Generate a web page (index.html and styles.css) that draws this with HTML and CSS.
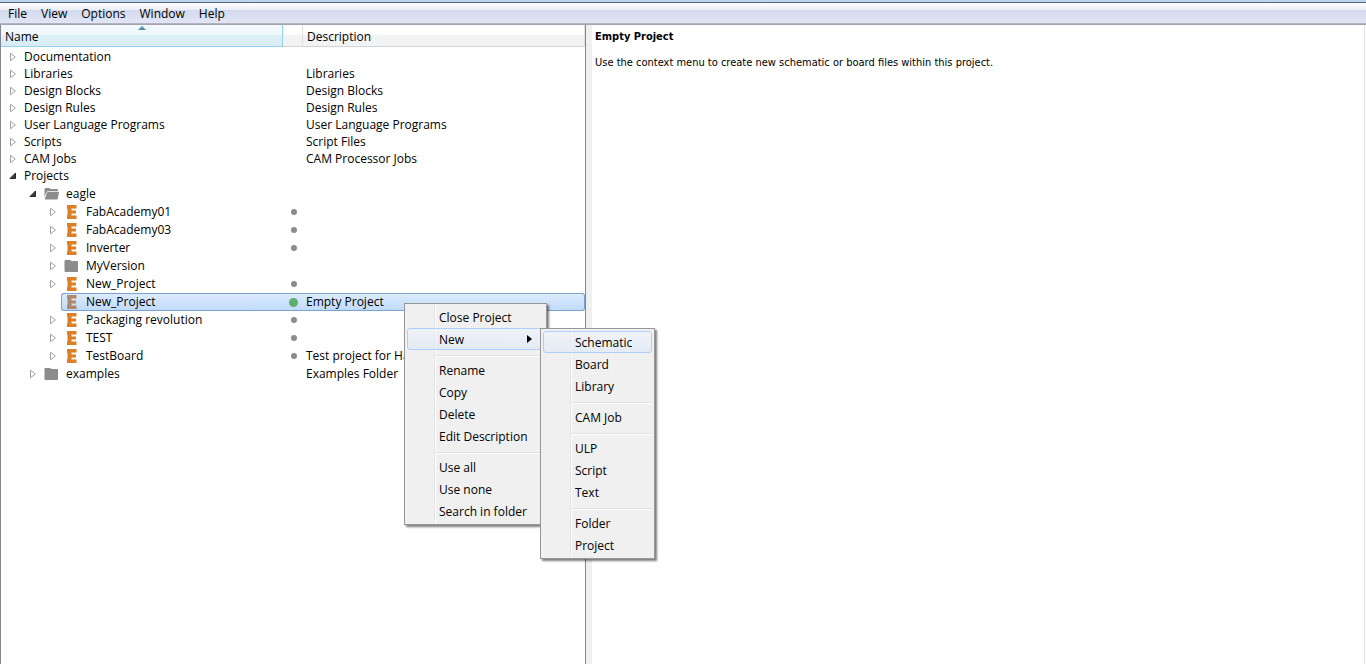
FILE: index.html
```
<!DOCTYPE html>
<html lang="en">

<head>
    <meta charset="utf-8">
    <title>Control Panel</title>
    <link rel="stylesheet" href="styles.css">
</head>

<body>
    <!-- Shared icons -->
    <svg class="symbols" aria-hidden="true">
        <symbol id="closed" viewBox="0 0 8 10">
            <path d="M1.5 1.2 L6.3 5 L1.5 8.8 Z" fill="#fff" stroke="#a0a0a0"/>
        </symbol>
        <symbol id="opened" viewBox="0 0 8 10">
            <path d="M6.5 2 V7.5 H1 Z" fill="#404040" stroke="#262626"/>
        </symbol>
        <symbol id="folder" viewBox="0 0 16 16">
            <path d="M0.5 3 Q0.5 2 1.5 2 H6 L7.5 3 H13 Q14 3 14 4 V13 Q14 14 13 14 H1.5 Q0.5 14 0.5 13 Z" fill="#8c8c8c"/>
        </symbol>
        <symbol id="folder-open" viewBox="0 0 16 16">
            <path d="M0.5 3 Q0.5 2 1.5 2 H5.5 L6.5 3 H13 Q14 3 14 4 V5.2 H4 Q3 5.2 2.700 6 L0.5 10.5 Z" fill="#8c8c8c"/>
            <path d="M4 6 H15 L13.800 12.600 Q13.600 13.600 12.600 13.600 H1.5 Q0.700 13.600 1 12.600 L2.800 7 Q3.200 6 4 6 Z" fill="#8c8c8c"/>
        </symbol>
        <symbol id="project" viewBox="0 0 16 16">
            <path d="M3 1 H12.5 V4.500 H7.500 V6.500 H12 V9.500 H7.500 V11.500 H12.5 V15 H3 V11.500 L3.500 11 V5 L3 4.500 Z" fill="currentColor"/>
        </symbol>
    </svg>

    <nav class="menubar">
        <button>File</button>
        <button>View</button>
        <button>Options</button>
        <button>Window</button>
        <button>Help</button>
    </nav>

    <main class="panes">
        <section class="tree-pane">
            <table class="tree">
                <colgroup>
                    <col class="col-name">
                    <col class="col-status">
                    <col>
                </colgroup>
                <thead>
                    <tr>
                        <th class="sorted">Name<svg class="sort" viewBox="0 0 8 4"><path d="M0 4 L4 0 L8 4 Z" fill="#4f8fae"/></svg></th>
                        <th></th>
                        <th>Description</th>
                    </tr>
                </thead>
                <tbody>
                    <tr>
                        <td><div class="node"><button class="toggle" aria-label="Expand"><svg><use href="#closed"/></svg></button><span class="item">Documentation</span></div></td>
                        <td></td>
                        <td></td>
                    </tr>
                    <tr>
                        <td><div class="node"><button class="toggle" aria-label="Expand"><svg><use href="#closed"/></svg></button><span class="item">Libraries</span></div></td>
                        <td></td>
                        <td>Libraries</td>
                    </tr>
                    <tr>
                        <td><div class="node"><button class="toggle" aria-label="Expand"><svg><use href="#closed"/></svg></button><span class="item">Design Blocks</span></div></td>
                        <td></td>
                        <td>Design Blocks</td>
                    </tr>
                    <tr>
                        <td><div class="node"><button class="toggle" aria-label="Expand"><svg><use href="#closed"/></svg></button><span class="item">Design Rules</span></div></td>
                        <td></td>
                        <td>Design Rules</td>
                    </tr>
                    <tr>
                        <td><div class="node"><button class="toggle" aria-label="Expand"><svg><use href="#closed"/></svg></button><span class="item">User Language Programs</span></div></td>
                        <td></td>
                        <td>User Language Programs</td>
                    </tr>
                    <tr>
                        <td><div class="node"><button class="toggle" aria-label="Expand"><svg><use href="#closed"/></svg></button><span class="item">Scripts</span></div></td>
                        <td></td>
                        <td>Script Files</td>
                    </tr>
                    <tr>
                        <td><div class="node"><button class="toggle" aria-label="Expand"><svg><use href="#closed"/></svg></button><span class="item">CAM Jobs</span></div></td>
                        <td></td>
                        <td>CAM Processor Jobs</td>
                    </tr>
                    <tr>
                        <td><div class="node"><button class="toggle" aria-label="Collapse"><svg><use href="#opened"/></svg></button><span class="item">Projects</span></div></td>
                        <td></td>
                        <td></td>
                    </tr>
                </tbody>
                <!-- Project folders -->
                <tbody class="projects">
                    <tr>
                        <td><div class="node level1"><button class="toggle" aria-label="Collapse"><svg><use href="#opened"/></svg></button><span class="item"><svg class="icon"><use href="#folder-open"/></svg>eagle</span></div></td>
                        <td></td>
                        <td></td>
                    </tr>
                    <tr>
                        <td><div class="node level2"><button class="toggle" aria-label="Expand"><svg><use href="#closed"/></svg></button><span class="item"><svg class="icon"><use href="#project"/></svg>FabAcademy01</span></div></td>
                        <td><span class="dot"></span></td>
                        <td></td>
                    </tr>
                    <tr>
                        <td><div class="node level2"><button class="toggle" aria-label="Expand"><svg><use href="#closed"/></svg></button><span class="item"><svg class="icon"><use href="#project"/></svg>FabAcademy03</span></div></td>
                        <td><span class="dot"></span></td>
                        <td></td>
                    </tr>
                    <tr>
                        <td><div class="node level2"><button class="toggle" aria-label="Expand"><svg><use href="#closed"/></svg></button><span class="item"><svg class="icon"><use href="#project"/></svg>Inverter</span></div></td>
                        <td><span class="dot"></span></td>
                        <td></td>
                    </tr>
                    <tr>
                        <td><div class="node level2"><button class="toggle" aria-label="Expand"><svg><use href="#closed"/></svg></button><span class="item"><svg class="icon"><use href="#folder"/></svg>MyVersion</span></div></td>
                        <td></td>
                        <td></td>
                    </tr>
                    <tr>
                        <td><div class="node level2"><button class="toggle" aria-label="Expand"><svg><use href="#closed"/></svg></button><span class="item"><svg class="icon"><use href="#project"/></svg>New_Project</span></div></td>
                        <td><span class="dot"></span></td>
                        <td></td>
                    </tr>
                    <tr class="selected">
                        <td><div class="node level2"><span class="toggle"></span><span class="item"><svg class="icon"><use href="#project"/></svg>New_Project</span></div></td>
                        <td><span class="dot active"></span></td>
                        <td>Empty Project</td>
                    </tr>
                    <tr>
                        <td><div class="node level2"><button class="toggle" aria-label="Expand"><svg><use href="#closed"/></svg></button><span class="item"><svg class="icon"><use href="#project"/></svg>Packaging revolution</span></div></td>
                        <td><span class="dot"></span></td>
                        <td></td>
                    </tr>
                    <tr>
                        <td><div class="node level2"><button class="toggle" aria-label="Expand"><svg><use href="#closed"/></svg></button><span class="item"><svg class="icon"><use href="#project"/></svg>TEST</span></div></td>
                        <td><span class="dot"></span></td>
                        <td></td>
                    </tr>
                    <tr>
                        <td><div class="node level2"><button class="toggle" aria-label="Expand"><svg><use href="#closed"/></svg></button><span class="item"><svg class="icon"><use href="#project"/></svg>TestBoard</span></div></td>
                        <td><span class="dot"></span></td>
                        <td>Test project for Ha</td>
                    </tr>
                    <tr>
                        <td><div class="node level1"><button class="toggle" aria-label="Expand"><svg><use href="#closed"/></svg></button><span class="item"><svg class="icon"><use href="#folder"/></svg>examples</span></div></td>
                        <td></td>
                        <td>Examples Folder</td>
                    </tr>
                </tbody>
            </table>
        </section>

        <section class="details">
            <h1>Empty Project</h1>
            <p>Use the context menu to create new schematic or board files within this project.</p>
        </section>
    </main>

    <!-- Context menu -->
    <div class="menu context">
        <button>Close Project</button>
        <button class="hot">New<svg class="more" viewBox="0 0 5 8"><path d="M0 0 L5 4 L0 8 Z"/></svg></button>
        <hr>
        <button>Rename</button>
        <button>Copy</button>
        <button>Delete</button>
        <button>Edit Description</button>
        <hr>
        <button>Use all</button>
        <button>Use none</button>
        <button>Search in folder</button>
    </div>

    <!-- New submenu -->
    <div class="menu submenu">
        <button class="hot">Schematic</button>
        <button>Board</button>
        <button>Library</button>
        <hr>
        <button>CAM Job</button>
        <hr>
        <button>ULP</button>
        <button>Script</button>
        <button>Text</button>
        <hr>
        <button>Folder</button>
        <button>Project</button>
    </div>
</body>

</html>
```
FILE: styles.css
```
* {
    box-sizing: border-box;
}

body {
    margin: 0;
    height: 100vh;
    display: flex;
    flex-direction: column;
    overflow: hidden;
    font-family: "Segoe UI", "Open Sans", sans-serif;
    font-size: 12px;
    color: #000;
    background-color: #fff;
}

button {
    font: inherit;
    color: inherit;
    background: none;
    border: none;
    padding: 0;
}

.symbols {
    display: none;
}

.menubar {
    display: flex;
    gap: 1px;
    height: 25px;
    padding: 3px 0 2px 2px;
    background: linear-gradient(#bdd5ef 2px, #53657e 2px, #53657e 3px, #fff 3px, #e9edf6 10px, #d3daed 10px, #e1e6f6 23px, #b9b9c8 23px, #9c9cac 25px);
}

.menubar button {
    padding: 0 7px 0 6px;
}

.panes {
    flex: 1;
    display: flex;
}

.tree-pane {
    flex: 0 0 42.9%;
    border-left: 1px solid #828790;
    border-right: 1px solid #828790;
}

.tree {
    width: 100%;
    table-layout: fixed;
    border-collapse: separate;
    border-spacing: 0;
}

.col-name {
    width: 282px;
}

.col-status {
    width: 20px;
}

.tree th {
    position: relative;
    height: 22px;
    padding: 3px 4px 0;
    font-weight: normal;
    text-align: left;
    line-height: 18px;
    border-right: 1px solid #e0e1e3;
    border-bottom: 1px solid #d5d5d5;
    background: linear-gradient(#fff 45%, #f2f3f5 46%);
}

.tree th.sorted {
    border-color: #93d5f1;
    background: linear-gradient(#f2f9fc 45%, #e0f1f8 46%, #d8ecf5);
}

.sort {
    position: absolute;
    top: 1px;
    left: calc(50% - 4px);
    width: 8px;
    height: 4px;
}

.tree tbody::before {
    content: "";
    display: block;
    height: 1px;
}

.tree td {
    height: 17px;
    padding: 0 3px;
    line-height: 16px;
    white-space: nowrap;
}

.tree td:first-child {
    padding: 0;
}

.projects td {
    height: 18px;
}

.node {
    display: flex;
    height: 17px;
}

.projects .node {
    height: 18px;
}

.level1 {
    padding-left: 20px;
}

.level2 {
    padding-left: 40px;
}

.toggle {
    width: 20px;
    padding-left: 3px;
    display: flex;
    align-items: center;
    justify-content: center;
}

.toggle svg {
    width: 8px;
    height: 10px;
}

.item {
    flex: 1;
    display: flex;
    align-items: center;
    gap: 6px;
    padding-left: 2px;
    border: 1px solid transparent;
    border-width: 1px 0 1px 1px;
}

.icon {
    width: 16px;
    height: 16px;
    color: #dd7f24;
}

.dot {
    display: block;
    width: 6px;
    height: 6px;
    margin: 0 auto 0 5px;
    border-radius: 50%;
    background-color: #8c8c8c;
}

.dot.active {
    width: 9px;
    height: 9px;
    margin-left: 3px;
    background-color: #5fae6c;
}

.selected .item,
.selected td:not(:first-child) {
    border-top: 1px solid #7da2ce;
    border-bottom: 1px solid #7da2ce;
    background: linear-gradient(#dcebfd, #c1dbfc);
}

.selected .item {
    border-left: 1px solid #7da2ce;
    border-radius: 3px 0 0 3px;
}

.selected td:last-child {
    border-right: 1px solid #7da2ce;
    border-radius: 0 3px 3px 0;
}

.selected .icon {
    color: #b08868;
}

.details {
    flex: 1;
    margin-right: 1px;
    padding: 3px;
    border-left: 6px solid #f0f0f0;
    border-right: 1px solid #e3e3e6;
    font-family: Tahoma, "DejaVu Sans Condensed", "DejaVu Sans", sans-serif;
    font-size: 11px;
}

.details h1 {
    margin: 0;
    font-size: 11px;
    line-height: 18px;
}

.details p {
    margin: 10px 0;
    line-height: 14px;
}

.menu {
    position: absolute;
    display: flex;
    flex-direction: column;
    padding: 2px;
    border: 1px solid #979797;
    background: linear-gradient(90deg, transparent 29px, #e2e3e3 29px, #e2e3e3 30px, #fff 30px, #fff 31px, transparent 31px) #f0f0f0;
    box-shadow: 2px 2px 2px rgba(0, 0, 0, 0.5);
}

.context {
    top: 303px;
    left: 404px;
    width: 143px;
}

.submenu {
    top: 328px;
    left: 540px;
    width: 115px;
}

.menu button {
    display: flex;
    align-items: center;
    justify-content: space-between;
    height: 22px;
    padding: 0 11px 0 31px;
    border: 1px solid transparent;
    border-radius: 3px;
    white-space: nowrap;
}

.menu .hot {
    border-color: #aecff7;
    background: linear-gradient(rgba(240, 245, 252, 0.6), rgba(220, 232, 248, 0.6));
}

.menu hr {
    width: calc(100% - 28px);
    height: 2px;
    margin: 5px 0 2px 28px;
    border: none;
    border-top: 1px solid #e0e0e0;
    background-color: #fff;
}

.more {
    width: 5px;
    height: 8px;
}
```
